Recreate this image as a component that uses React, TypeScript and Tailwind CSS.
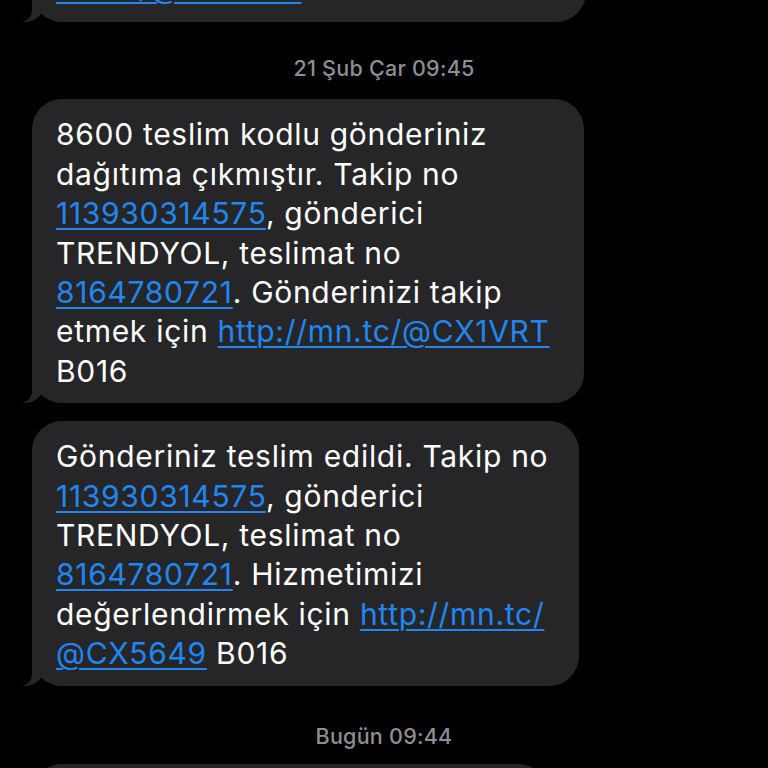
import React from "react";

type Part = string | { link: string };

const Line = ({ parts }: { parts: Part[] }) => (
  <div className="whitespace-nowrap">
    {parts.map((p, i) =>
      typeof p === "string" ? (
        <span key={i}>{p}</span>
      ) : (
        <span
          key={i}
          className="text-[#1f86f4] underline decoration-[1.5px] underline-offset-[4px]"
        >
          {p.link}
        </span>
      )
    )}
  </div>
);

const Tail = () => (
  <svg
    className="absolute left-[-12px] bottom-0 w-[30px] h-[30px]"
    viewBox="0 0 30 30"
  >
    <path
      d="M12 0 L12 18 C12 25 7 29 1.5 30 C8 30.6 13.5 28.8 17.5 25.5 L28 14 L28 0 Z"
      fill="#262628"
    />
  </svg>
);

const Bubble = ({
  lines,
  width,
  className = "",
  pad = "pt-[16px] pb-[12px]",
}: {
  lines: Part[][];
  width: string;
  className?: string;
  pad?: string;
}) => (
  <div className={`relative ${width} ${className}`}>
    <div
      className={`bg-[#262628] rounded-[30px] pl-[24px] ${pad} text-white text-[30px] leading-[39.4px] tracking-[0.7px]`}
    >
      {lines.map((l, i) => (
        <Line key={i} parts={l} />
      ))}
    </div>
    <Tail />
  </div>
);

const Stamp = ({ text, className = "" }: { text: string; className?: string }) => (
  <div
    className={`text-center text-[#8e8e93] text-[21.5px] leading-[24px] font-medium tracking-[0.25px] pr-[32px] ${className}`}
  >
    {text}
  </div>
);

const App = () => {
  return (
    <div className="w-[768px] h-[768px] bg-black overflow-hidden font-['Inter','Noto_Sans',sans-serif]">
      <div className="flex flex-col pl-[32px]">
        {/* previous message, mostly scrolled off */}
        <Bubble
          width="w-[554px]"
          className="mt-[-48px]"
          pad="pt-[16px] pb-[15px]"
          lines={[[{ link: "mn.tc/@CX2BTR" }]]}
        />
        <Stamp text="21 Şub Çar 09:45" className="mt-[34px] mb-[19px]" />
        <Bubble
          width="w-[552px]"
          lines={[
            ["8600 teslim kodlu gönderiniz"],
            ["dağıtıma çıkmıştır. Takip no"],
            [{ link: "113930314575" }, ", gönderici"],
            ["TRENDYOL, teslimat no"],
            [{ link: "8164780721" }, ". Gönderinizi takip"],
            ["etmek için ", { link: "http://mn.tc/@CX1VRT" }],
            ["B016"],
          ]}
        />
        <Bubble
          width="w-[547px]"
          className="mt-[18px]"
          lines={[
            ["Gönderiniz teslim edildi. Takip no"],
            [{ link: "113930314575" }, ", gönderici"],
            ["TRENDYOL, teslimat no"],
            [{ link: "8164780721" }, ". Hizmetimizi"],
            ["değerlendirmek için ", { link: "http://mn.tc/" }],
            [{ link: "@CX5649" }, " B016"],
          ]}
        />
        <Stamp text="Bugün 09:44" className="mt-[38px] mb-[16px]" />
        <div className="w-[516px] h-[80px] bg-[#262628] rounded-[30px]" />
      </div>
    </div>
  );
};

export default App;
